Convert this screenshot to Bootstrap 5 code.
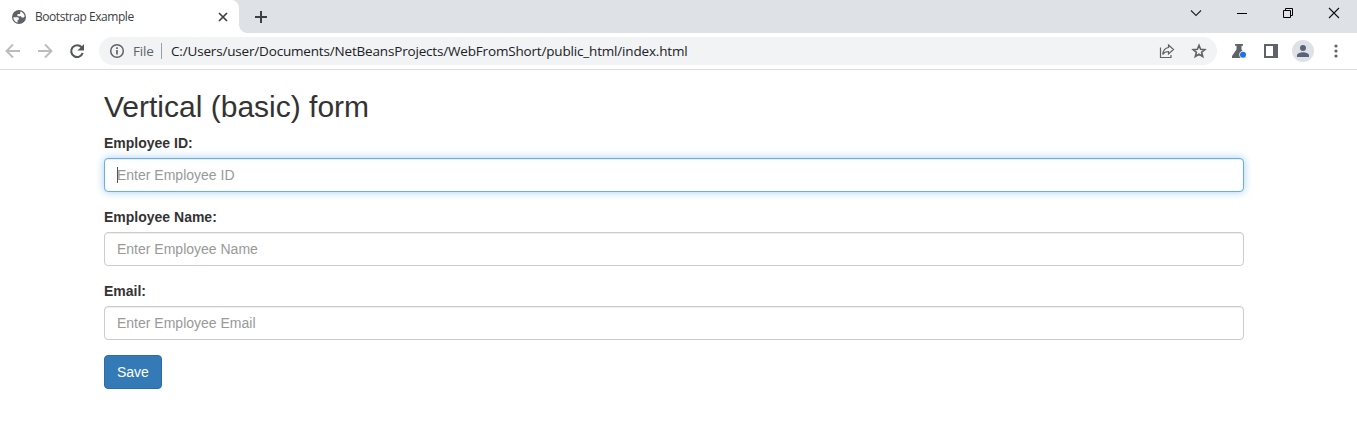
<!DOCTYPE html>
<html lang="en">
<head>
<meta charset="utf-8">
<meta name="viewport" content="width=device-width, initial-scale=1">
<title>Bootstrap Example</title>
<link href="https://cdn.jsdelivr.net/npm/bootstrap@5.3.0/dist/css/bootstrap.min.css" rel="stylesheet">
<style>
  body { font-family: "Liberation Sans", Arial, sans-serif; font-size: 14px; line-height: 20px; color: #333; background: #fff; height: 428px; overflow: hidden; }
  svg { display: block; flex: none; }
  .chrome-ui { font-family: "Open Sans", sans-serif; }
  .tab-strip { height: 33px; background: #dee1e6; }
  .browser-tab { width: 239px; height: 33px; background: #fff; border-top-right-radius: 8px; padding: 0 10px 0 11px; }
  .tab-curve { width: 8px; height: 8px; background: radial-gradient(circle at 100% 0, #dee1e6 7.5px, #fff 8px); }
  .new-tab { margin-left: 7px; }
  .window-buttons { padding: 7px 17px 0 0; gap: 34px; }
  .tab-title { font-size: 12px; color: #3c4043; margin-left: 8px; letter-spacing: -.45px; line-height: 16px; }
  .toolbar { height: 37px; border-bottom: 1px solid #dadce0; background: #fff; padding: 4px 13.5px 4px 5px; }
  .gap-icon { margin-left: 16px; }
  .omnibox { height: 28px; border-radius: 14px; background: #f1f3f4; margin-left: 14px; width: 1118px; padding: 0 10px; }
  .scheme { color: #5f6368; font-size: 13.5px; margin-left: 8px; width: 21px; letter-spacing: -.2px; }
  .sep { width: 1px; height: 16px; background: #9aa0a6; margin: 0 9px 0 7px; }
  .url { color: #202124; font-size: 13.5px; letter-spacing: -.175px; white-space: nowrap; }
  .labs { margin-left: 14px; }
  .avatar { width: 22px; height: 22px; border-radius: 50%; background: #dee1e6; margin-left: 13px; }
  .page-body { width: 1140px; margin-left: 104px; padding-top: 20px; }
  h2 { font-size: 30px; line-height: 33px; font-weight: 400; margin: 0 0 10px; color: #333; }
  .form-label { font-weight: 700; margin-bottom: 5px; display: block; line-height: 20px; width: max-content; }
  .form-group { margin-bottom: 15px; }
  .form-control { height: 34px; padding: 6px 12px; font-size: 14px; line-height: 20px; border: 1px solid #ccc; border-radius: 4px; box-shadow: inset 0 1px 1px rgba(0,0,0,.075); }
  .form-control::placeholder { color: #999; }
  .form-control.active-field { border-color: #66afe9; box-shadow: inset 0 1px 1px rgba(0,0,0,.075), 0 0 8px rgba(102,175,233,.6); }
  .caret { left: 13px; top: 9px; width: 1px; height: 16px; background: #555; }
  .btn-save { height: 34px; padding: 6px 12px; font-size: 14px; line-height: 20px; border: 1px solid #2e6da4; border-radius: 4px; background: #337ab7; color: #fff; }
</style>
</head>
<body>
<header class="chrome-ui">
  <div class="tab-strip d-flex">
    <div class="browser-tab d-flex align-items-center">
      <svg width="16" height="16" viewBox="0 0 16 16"><circle cx="8" cy="8" r="7" fill="#5f6368"/><path d="M2.300 8.300H6c1.300 0 1.900.6 1.900 1.500v.9H6.600v2.900C4.200 13.100 2.400 11 2.300 8.300zM9.300 2.500c2.200.5 4 2.400 4.400 4.700l-.9 1.400h-1.300c-.9 0-1.300-.5-1.300-1.300H7.400c-.7 0-1.100-.4-1.100-1.100 0-.9.5-1.300 1.300-1.300h.7c.7 0 1-.4 1-1z" fill="#fff"/></svg>
      <span class="tab-title">Bootstrap Example</span>
      <svg class="ms-auto" width="12" height="12" viewBox="0 0 12 12" stroke="#3c4043" stroke-width="1.700"><path d="M2 2l8 8M10 2l-8 8"/></svg>
    </div>
    <div class="tab-curve align-self-end"></div>
    <svg class="new-tab align-self-center" width="14" height="14" viewBox="0 0 14 14" stroke="#3c4043" stroke-width="2"><path d="M7 1v12M1 7h12"/></svg>
    <div class="window-buttons d-flex ms-auto">
      <svg width="12" height="12" viewBox="0 0 12 12" fill="none" stroke="#222" stroke-width="1.100"><path d="M1 3.500l5 5 5-5"/></svg>
      <svg width="12" height="12" viewBox="0 0 12 12"><path d="M1 6h10v1H1z"/></svg>
      <svg width="12" height="12" viewBox="0 0 12 12" fill="none" stroke="#000"><path d="M1.500 3.500h7v7h-7zM3.500 3.500v-2h7v7h-2"/></svg>
      <svg width="12" height="12" viewBox="0 0 12 12" stroke="#111" stroke-width="1.100"><path d="M1 1l10 10M11 1L1 11"/></svg>
    </div>
  </div>
  <div class="toolbar d-flex align-items-center">
    <svg width="16" height="16" viewBox="0 0 16 16" fill="none" stroke="#babcbe" stroke-width="1.900"><path d="M15 8H2.500M8 1.500L1.500 8 8 14.500"/></svg>
    <svg class="gap-icon" width="16" height="16" viewBox="0 0 16 16" fill="none" stroke="#babcbe" stroke-width="1.900"><path d="M1 8h12.500M8 1.500L14.500 8 8 14.500"/></svg>
    <svg class="gap-icon" width="16" height="16" viewBox="0 0 16 16"><path d="M12.600 4.300A5.900 5.900 0 1 0 13.700 10" fill="none" stroke="#54585d" stroke-width="2.100"/><path d="M15 1v6.500H8.500z" fill="#54585d"/></svg>
    <div class="omnibox d-flex align-items-center">
      <svg width="16" height="16" viewBox="0 0 16 16" fill="none" stroke="#5f6368" stroke-width="1.500"><circle cx="8" cy="8" r="6.300"/><path d="M8 7v4.500M8 4.300v1.600" stroke-width="1.700"/></svg>
      <span class="scheme">File</span><span class="sep"></span>
      <span class="url">C:/Users/user/Documents/NetBeansProjects/WebFromShort/public_html/index.html</span>
      <svg class="ms-auto" width="16" height="16" viewBox="0 0 16 16" fill="none" stroke="#5f6368" stroke-width="1.200"><path d="M1.500 4.500v10h10.500V12M9.500 2l5 4.500-5 4.500V8.500C7 8.500 5 9.500 3.700 11.500 4 8 6 5 9.500 4.500z"/></svg>
      <svg class="gap-icon" width="16" height="16" viewBox="0 0 16 16" fill="none" stroke="#5f6368" stroke-width="1.600"><path d="M8 2.300l1.600 4 4.200.3-3.200 2.700 1.100 4.200L8 11.200l-3.700 2.300 1.100-4.200-3.200-2.700 4.200-.3z"/></svg>
    </div>
    <svg class="labs" width="16" height="16" viewBox="0 0 16 16"><path d="M4 1h8v1.800h-1.500V6.500L15 13v2H1v-2L5.500 6.500V2.800H4z" fill="#5f6368"/><circle cx="12" cy="11.800" r="3.700" fill="#fff"/><circle cx="12" cy="11.800" r="3" fill="#1a73e8"/></svg>
    <svg class="gap-icon" width="16" height="16" viewBox="0 0 16 16" fill="#5f6368" fill-rule="evenodd"><path d="M1 1h14v14H1zM3 3v10h7V3z"/></svg>
    <div class="avatar d-flex align-items-center justify-content-center"><svg width="14" height="14" viewBox="0 0 14 14" fill="#5a6478"><circle cx="7" cy="4" r="3"/><path d="M1 13v-1.800C1 9.300 5 8.300 7 8.300s6 1 6 2.900V13z"/></svg></div>
    <svg class="ms-auto" width="16" height="16" viewBox="0 0 16 16" fill="#5f6368"><circle cx="8" cy="3" r="1.600"/><circle cx="8" cy="8" r="1.600"/><circle cx="8" cy="13" r="1.600"/></svg>
  </div>
</header>
<main class="page-body">
  <h2>Vertical (basic) form</h2>
  <form>
    <div class="form-group">
      <label class="form-label" for="eid">Employee ID:</label>
      <div class="position-relative"><input id="eid" type="text" class="form-control active-field" placeholder="Enter Employee ID"><span class="caret position-absolute"></span></div>
    </div>
    <div class="form-group">
      <label class="form-label" for="ename">Employee Name:</label>
      <input id="ename" type="text" class="form-control" placeholder="Enter Employee Name">
    </div>
    <div class="form-group">
      <label class="form-label" for="email">Email:</label>
      <input id="email" type="email" class="form-control" placeholder="Enter Employee Email">
    </div>
    <button type="button" class="btn btn-save">Save</button>
  </form>
</main>
<script src="https://cdn.jsdelivr.net/npm/bootstrap@5.3.0/dist/js/bootstrap.bundle.min.js"></script>
</body>
</html>
